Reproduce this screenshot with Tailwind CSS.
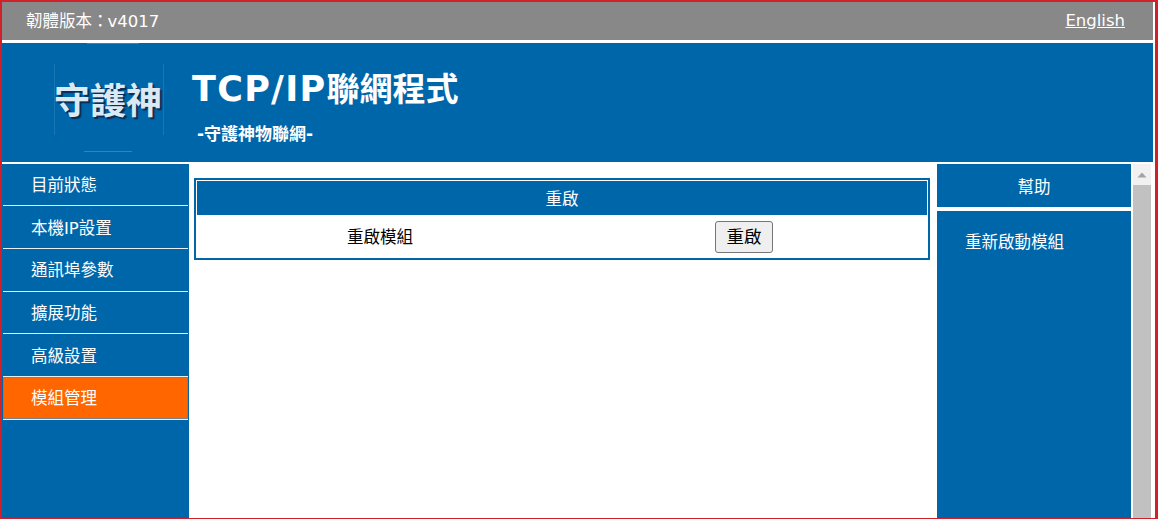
<!DOCTYPE html>
<html lang="zh-Hant">
<head>
  <meta charset="UTF-8">
  <title>TCP/IP</title>
  <script src="https://cdn.jsdelivr.net/npm/@tailwindcss/browser@4"></script>
</head>
<body class="bg-white overflow-hidden">
  <div class="w-[1158px] h-[519px] flex flex-col bg-white border-t-2 border-l-2 border-r-[3px] border-b border-[#d0202a] font-['DejaVu_Sans','Noto_Sans_CJK_TC',sans-serif] overflow-hidden">

    <!-- top bar -->
    <div class="h-[38px] shrink-0 mr-[2px] bg-[#888888] flex items-center justify-between pl-[24px] pr-[28px] pt-[2px] text-[16.5px] text-white">
      <span>韌體版本：<span class="-ml-[1px]">v4017</span></span>
      <a href="#" class="underline -mt-[2px]">English</a>
    </div>

    <!-- banner -->
    <div class="h-[119px] shrink-0 mt-[3px] mr-[2px] bg-[#0066aa] flex">
      <div class="w-[52px] shrink-0"></div>
      <div class="relative w-[138px] shrink-0 flex items-center">
        <span class="absolute left-[33px] top-0 w-[52px] h-px bg-white/20"></span>
        <span class="absolute left-0 top-[21px] w-[110px] h-[71px] border-x border-white/10"></span>
        <span class="absolute left-[30px] top-[108px] w-[48px] h-px bg-white/20"></span>
        <span class="relative -mt-[10px] text-[36px] leading-none text-[#dbe9f5] font-bold font-['Noto_Sans_CJK_TC',serif] [text-shadow:2px_2px_1px_#0b2b52]">守護神</span>
      </div>
      <div class="pt-[26px] text-white font-bold">
        <h1 class="text-[33px] leading-[40px]"><span class="text-[35px] tracking-[1.3px]">TCP/IP</span>聯網程式</h1>
        <p class="mt-[13px] ml-[5px] text-[17px] leading-[22px]">-守護神物聯網-</p>
      </div>
    </div>

    <div class="flex flex-1 min-h-0 mt-[2px]">
      <!-- left menu -->
      <nav class="w-[187px] shrink-0 bg-[#0066aa] text-[16.5px] text-white">
        <a class="flex items-center h-[42px] mx-px pl-[28px] pt-[4px] border-b border-white/90">目前狀態</a>
        <a class="flex items-center h-[43px] mx-px pl-[28px] pt-[5px] border-b border-white/90">本機IP設置</a>
        <a class="flex items-center h-[43px] mx-px pl-[28px] pt-[2px] border-b border-white/90">通訊埠參數</a>
        <a class="flex items-center h-[42px] mx-px pl-[28px] pt-[4px] border-b border-white/90">擴展功能</a>
        <a class="flex items-center h-[43px] mx-px pl-[28px] pt-[5px] border-b border-white/90">高級設置</a>
        <a class="flex items-center h-[42px] mx-px pl-[27px] pt-[3px] bg-[#ff6600] border border-[#7f7f7f]">模組管理</a>
        <div class="h-px mx-px bg-white/90"></div>
      </nav>

      <!-- main -->
      <main class="w-[748px] shrink-0 px-[5px] pt-[14px]">
        <div class="w-[736px] h-[82px] border-2 border-[#0066aa] p-px">
          <div class="h-[34px] bg-[#0066aa] text-white text-[16.5px] pt-[4px] flex items-center justify-center">重啟</div>
          <div class="flex items-center h-[44px] text-[16.5px] text-black">
            <span class="ml-[150px] mt-[2px]">重啟模組</span>
            <button class="ml-[302px] w-[58px] h-[32px] bg-[#efefef] border border-[#767676] rounded-[3px] text-[17.5px] text-black">重啟</button>
          </div>
        </div>
      </main>

      <!-- help -->
      <aside class="w-[194px] shrink-0 flex flex-col text-white text-[16.5px]">
        <div class="h-[43px] shrink-0 bg-[#0066aa] pt-[5px] flex items-center justify-center">幫助</div>
        <div class="flex-1 mt-[4px] bg-[#0066aa] pl-[28px] pt-[20px]">重新啟動模組</div>
      </aside>

      <!-- scrollbar -->
      <div class="w-[18px] shrink-0 ml-[2px] bg-[#f1f1f1] flex flex-col">
        <div class="h-[21px] shrink-0 flex items-center justify-center">
          <svg width="10" height="6" viewBox="0 0 10 6"><path d="M5 0.5 L9.5 5.5 L0.5 5.5 Z" fill="#a3a3a3"/></svg>
        </div>
        <div class="flex-1 bg-[#c1c1c1]"></div>
      </div>
    </div>
  </div>
</body>
</html>
